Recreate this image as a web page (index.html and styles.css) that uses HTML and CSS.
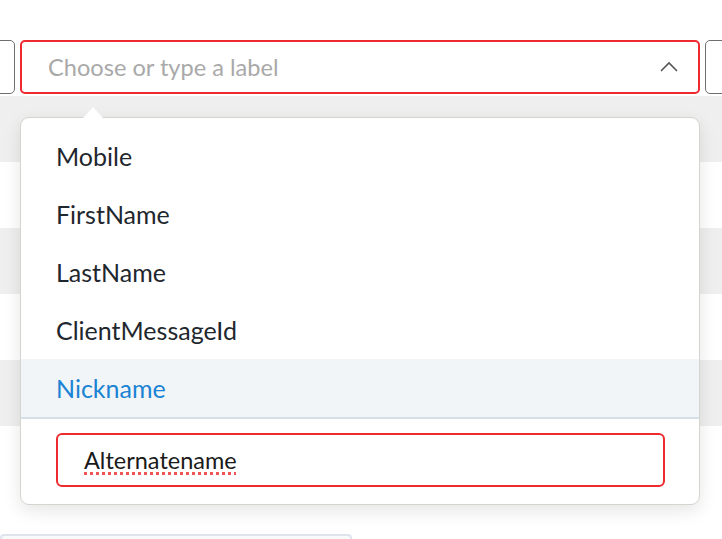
FILE: index.html
```html
<!DOCTYPE html>
<html>
<head>
<meta charset="utf-8">
<link rel="stylesheet" href="styles.css">
</head>
<body>
<div class="page">
  <div class="field-row">
    <div class="box side-left"></div>
    <div class="box select">
      <span class="placeholder">Choose or type a label</span>
      <svg class="chevron" width="18" height="11" viewBox="0 0 18 11"><path d="M1 10 L9 2 L17 10" fill="none" stroke="#555" stroke-width="1.6"/></svg>
    </div>
    <div class="box side-right"></div>
  </div>
  <div class="table">
    <div class="trow grey"></div>
    <div class="trow"></div>
    <div class="trow grey"></div>
    <div class="trow"></div>
    <div class="trow grey"></div>
    <div class="trow tall"></div>
    <div class="footer-box"></div>
  </div>
  <div class="menu">
    <div class="caret"></div>
    <ul class="options">
      <li class="option">Mobile</li>
      <li class="option">FirstName</li>
      <li class="option">LastName</li>
      <li class="option">ClientMessageId</li>
      <li class="option active">Nickname</li>
    </ul>
    <div class="new-label">
      <div class="new-input"><span class="typed">Alternatename</span></div>
    </div>
  </div>
</div>
</body>
</html>
```
FILE: styles.css
```css
html, body {
  margin: 0;
  padding: 0;
  background: #fff;
  overflow: hidden;
}
.page {
  position: relative;
  width: 722px;
  height: 539px;
  font-family: Lato, "Noto Sans", sans-serif;
  overflow: hidden;
}
.field-row {
  display: flex;
  gap: 5px;
  padding-top: 40px;
  margin-left: -85px;
  height: 54px;
}
.box {
  box-sizing: border-box;
  height: 54px;
  border-radius: 5px;
  background: #fff;
  flex: none;
}
.side-left {
  width: 100px;
  border: 1.5px solid #6f6f6f;
}
.side-right {
  width: 100px;
  border: 1.5px solid #6f6f6f;
}
.select {
  width: 680px;
  border: 2px solid #ec2a2f;
  display: flex;
  align-items: center;
  justify-content: space-between;
  padding: 0 20px 0 26px;
}
.placeholder {
  font-size: 23.6px;
  color: #a9a9a9;
}
.chevron {
  display: block;
  margin-top: -2px;
}
.table {
  margin-top: 2px;
}
.trow {
  height: 66px;
  background: #fff;
}
.trow.grey {
  background: #efefef;
}
.trow.tall {
  height: 108px;
}
.footer-box {
  width: 352px;
  height: 20px;
  box-sizing: border-box;
  border: 2px solid #dfe5ec;
  border-radius: 4px;
  background: #f7f9fb;
}
.menu {
  position: absolute;
  left: 20px;
  top: 117px;
  width: 680px;
  box-sizing: border-box;
  background: #fff;
  border: 1px solid #d5d5cf;
  border-radius: 9px;
  box-shadow: 0 6px 18px rgba(0, 0, 0, 0.10);
  padding-top: 9px;
}
.caret {
  position: absolute;
  left: 62px;
  top: -11px;
  width: 0;
  height: 0;
  border-left: 10px solid transparent;
  border-right: 10px solid transparent;
  border-bottom: 11px solid #fff;
}
.options {
  list-style: none;
  margin: 0;
  padding: 0;
}
.option {
  height: 58px;
  display: flex;
  align-items: center;
  padding-left: 35px;
  font-size: 25px;
  color: #1f272e;
}
.option.active {
  background: #f2f5f8;
  color: #1a83d3;
  border-bottom: 2px solid #d6dee7;
}
.new-label {
  padding: 14px 34px 17px 35px;
}
.new-input {
  box-sizing: border-box;
  height: 54px;
  border: 2px solid #ec2a2f;
  border-radius: 6px;
  display: flex;
  align-items: center;
  padding-left: 26px;
}
.typed {
  font-size: 23.5px;
  color: #1a1a1a;
  text-decoration: underline dotted #f05454;
  text-decoration-thickness: 3px;
  text-underline-offset: 3px;
}
```
